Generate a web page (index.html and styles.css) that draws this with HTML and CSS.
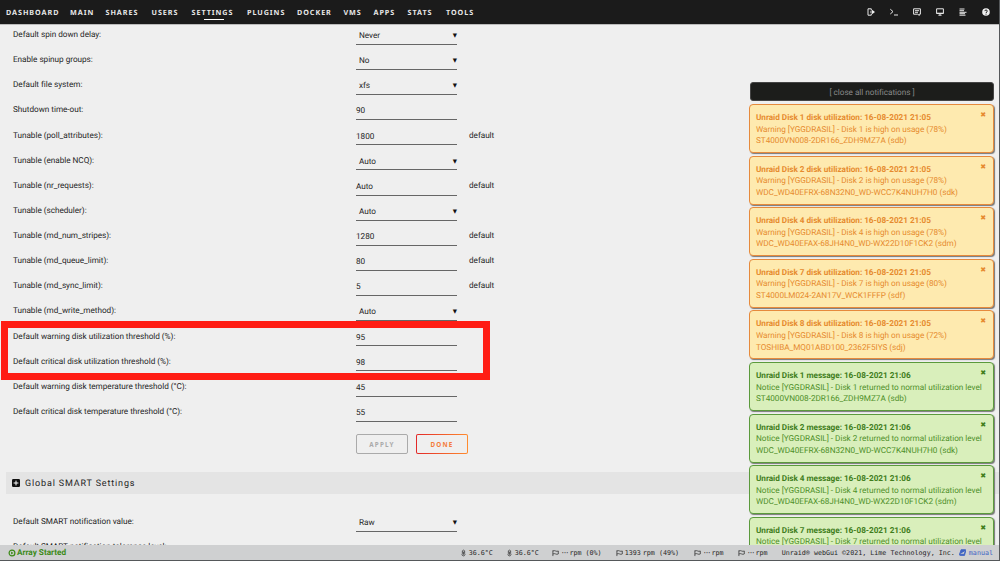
FILE: index.html
```
<!DOCTYPE html>
<html lang="en">
<head>
    <meta charset="UTF-8">
    <meta name="viewport" content="width=device-width, initial-scale=1.0">
    <title>Disk Settings</title>
    <link rel="stylesheet" href="styles.css">
</head>
<body>
    <header class="menu">
        <nav class="nav">
            <a>DASHBOARD</a>
            <a>MAIN</a>
            <a>SHARES</a>
            <a>USERS</a>
            <a class="active">SETTINGS</a>
            <a>PLUGINS</a>
            <a>DOCKER</a>
            <a>VMS</a>
            <a>APPS</a>
            <a>STATS</a>
            <a>TOOLS</a>
        </nav>
        <div class="tools">
            <svg viewBox="0 0 8 8"><path d="M4.300.8H1v6.400h3.300V5.500M4.300.8v1.700M3 4h3"/><path class="fill" d="M5 1.800 8 4 5 6.200z"/></svg>
            <svg viewBox="0 0 8 8"><path d="M.3 1.200 3 3.600.3 6M4 7h4"/></svg>
            <svg viewBox="0 0 8 8"><path d="M.6.8h6.800v5.400H6.300v1.300L4.800 6.200H.6zM2 2.700h4M2 4.300h3"/></svg>
            <svg viewBox="0 0 8 8"><path d="M.6.8h6.800v4.700H.6zM2.400 7.200h3.200M4 5.500v1.700" /><path d="M.6 5.200h6.800"/></svg>
            <svg viewBox="0 0 8 8"><path d="M.5 1h5M.5 2.700h4.500M.5 4.300h7M.5 5.700h5.500M.5 7.200h6"/></svg>
            <svg viewBox="0 0 8 8"><circle class="fill" cx="4" cy="4" r="3.800"/><path class="dark" d="M2.800 3.100c0-1.500 2.500-1.500 2.500 0C5.300 4 4 3.900 4 5M4 5.700v.9"/></svg>
        </div>
    </header>

    <main class="content">
        <form class="settings">
            <div class="row"><label>Default spin down delay:</label><span class="field select">Never</span></div>
            <div class="row"><label>Enable spinup groups:</label><span class="field select">No</span></div>
            <div class="row"><label>Default file system:</label><span class="field select">xfs</span></div>
            <div class="row"><label>Shutdown time-out:</label><span class="field">90</span></div>
            <div class="row"><label>Tunable (poll_attributes):</label><span class="field">1800</span><span class="note">default</span></div>
            <div class="row"><label>Tunable (enable NCQ):</label><span class="field select">Auto</span></div>
            <div class="row"><label>Tunable (nr_requests):</label><span class="field">Auto</span><span class="note">default</span></div>
            <div class="row"><label>Tunable (scheduler):</label><span class="field select">Auto</span></div>
            <div class="row"><label>Tunable (md_num_stripes):</label><span class="field">1280</span><span class="note">default</span></div>
            <div class="row"><label>Tunable (md_queue_limit):</label><span class="field">80</span><span class="note">default</span></div>
            <div class="row"><label>Tunable (md_sync_limit):</label><span class="field">5</span><span class="note">default</span></div>
            <div class="row"><label>Tunable (md_write_method):</label><span class="field select">Auto</span></div>
            <div class="marked">
                <div class="row"><label>Default warning disk utilization threshold (%):</label><span class="field">95</span></div>
                <div class="row"><label>Default critical disk utilization threshold (%):</label><span class="field">98</span></div>
            </div>
            <div class="row"><label>Default warning disk temperature threshold (°C):</label><span class="field">45</span></div>
            <div class="row"><label>Default critical disk temperature threshold (°C):</label><span class="field">55</span></div>
            <div class="buttons">
                <button type="button" class="btn" disabled>APPLY</button>
                <button type="button" class="btn done">DONE</button>
            </div>
        </form>
        <h2 class="title">
            <svg viewBox="0 0 8 8"><rect width="8" height="8" rx="1.200"/><path d="M4 1.600v4.800M1.600 4h4.800"/></svg>
            <span>Global SMART Settings</span>
        </h2>
        <form class="settings">
            <div class="row"><label>Default SMART notification value:</label><span class="field select">Raw</span></div>
            <div class="row"><label>Default SMART notification tolerance level:</label></div>
        </form>
    </main>

    <aside class="notices">
        <div class="close-all">[ close all notifications ]</div>
        <div class="notice warn"><span class="x">✖</span><b>Unraid Disk 1 disk utilization: 16-08-2021 21:05</b><p>Warning [YGGDRASIL] - Disk 1 is high on usage (78%)</p><p>ST4000VN008-2DR166_ZDH9MZ7A (sdb)</p></div>
        <div class="notice warn"><span class="x">✖</span><b>Unraid Disk 2 disk utilization: 16-08-2021 21:05</b><p>Warning [YGGDRASIL] - Disk 2 is high on usage (78%)</p><p>WDC_WD40EFRX-68N32N0_WD-WCC7K4NUH7H0 (sdk)</p></div>
        <div class="notice warn"><span class="x">✖</span><b>Unraid Disk 4 disk utilization: 16-08-2021 21:05</b><p>Warning [YGGDRASIL] - Disk 4 is high on usage (78%)</p><p>WDC_WD40EFAX-68JH4N0_WD-WX22D10F1CK2 (sdm)</p></div>
        <div class="notice warn"><span class="x">✖</span><b>Unraid Disk 7 disk utilization: 16-08-2021 21:05</b><p>Warning [YGGDRASIL] - Disk 7 is high on usage (80%)</p><p>ST4000LM024-2AN17V_WCK1FFFP (sdf)</p></div>
        <div class="notice warn"><span class="x">✖</span><b>Unraid Disk 8 disk utilization: 16-08-2021 21:05</b><p>Warning [YGGDRASIL] - Disk 8 is high on usage (72%)</p><p>TOSHIBA_MQ01ABD100_2362F5IYS (sdj)</p></div>
        <div class="notice ok"><span class="x">✖</span><b>Unraid Disk 1 message: 16-08-2021 21:06</b><p>Notice [YGGDRASIL] - Disk 1 returned to normal utilization level</p><p>ST4000VN008-2DR166_ZDH9MZ7A (sdb)</p></div>
        <div class="notice ok"><span class="x">✖</span><b>Unraid Disk 2 message: 16-08-2021 21:06</b><p>Notice [YGGDRASIL] - Disk 2 returned to normal utilization level</p><p>WDC_WD40EFRX-68N32N0_WD-WCC7K4NUH7H0 (sdk)</p></div>
        <div class="notice ok"><span class="x">✖</span><b>Unraid Disk 4 message: 16-08-2021 21:06</b><p>Notice [YGGDRASIL] - Disk 4 returned to normal utilization level</p><p>WDC_WD40EFAX-68JH4N0_WD-WX22D10F1CK2 (sdm)</p></div>
        <div class="notice ok"><span class="x">✖</span><b>Unraid Disk 7 message: 16-08-2021 21:06</b><p>Notice [YGGDRASIL] - Disk 7 returned to normal utilization level</p></div>
    </aside>

    <footer class="footer">
        <span class="array"><svg viewBox="0 0 8 8"><circle cx="4" cy="4" r="2.900"/><path d="M3.100 2.500v3L5.500 4z"/></svg>Array Started</span>
        <div class="sensors">
            <span><svg viewBox="0 0 8 8"><path d="M2.700 4.600V1.500q1.300-1.600 2.600 0v3.100q1 1.500-.4 2.500-1.300.6-2.200-.3-.8-1 0-2.200M4 2.500V6"/></svg>36.6°C</span>
            <span><svg viewBox="0 0 8 8"><path d="M2.700 4.600V1.500q1.300-1.600 2.600 0v3.100q1 1.500-.4 2.500-1.300.6-2.200-.3-.8-1 0-2.200M4 2.500V6"/></svg>36.6°C</span>
            <span><svg viewBox="0 0 8 8"><path d="M1 1v6.500M1 1.700q1.800-.8 3.200 0t3 0v3.400q-1.600.8-3 0T1 5.100"/></svg><i>···</i>rpm (0%)</span>
            <span><svg viewBox="0 0 8 8"><path d="M1 1v6.500M1 1.700q1.800-.8 3.200 0t3 0v3.400q-1.600.8-3 0T1 5.100"/></svg>1393<i></i>rpm (49%)</span>
            <span><svg viewBox="0 0 8 8"><path d="M1 1v6.500M1 1.700q1.800-.8 3.200 0t3 0v3.400q-1.600.8-3 0T1 5.100"/></svg><i>···</i>rpm</span>
            <span><svg viewBox="0 0 8 8"><path d="M1 1v6.500M1 1.700q1.800-.8 3.200 0t3 0v3.400q-1.600.8-3 0T1 5.100"/></svg><i>···</i>rpm</span>
        </div>
        <span class="copy">Unraid® webGui ©2021, Lime Technology, Inc.</span>
        <a class="manual"><svg viewBox="0 0 8 8"><path d="M2.400.8h5.200L6 6H.6zM.6 6q-.3 1.300.8 1.300h4.900L7.700 2"/></svg>manual</a>
    </footer>
</body>
</html>
```
FILE: styles.css
```
*,
*::before,
*::after {
    box-sizing: border-box;
}

body {
    display: flex;
    flex-direction: column;
    width: 1000px;
    height: 561px;
    margin: 0;
    overflow: hidden;
    background-color: #efefef;
    border-right: 1px solid #55585a;
    font-family: Roboto, "Noto Sans", sans-serif;
    font-size: 8.200px;
    letter-spacing: -.030px;
    text-rendering: geometricPrecision;
    color: #252525;
}

svg {
    flex: none;
    width: 8px;
    height: 8px;
    fill: none;
    stroke: currentColor;
    stroke-width: 1;
}

/* top menu */
.menu {
    display: flex;
    flex: none;
    justify-content: space-between;
    width: 1000px;
    height: 24px;
    padding: 0 10px 0 6px;
    background-color: #1b1b1b;
    box-shadow: 0 1px 0 #bbb;
    color: #e8e8e8;
}

.nav {
    display: grid;
    grid-template-columns: 64px 35.500px 46px 40px 55.500px 50px 46.500px 30px 34px 38.500px 40px;
    font-family: "Noto Sans", sans-serif;
    font-size: 7.200px;
    font-weight: bold;
    letter-spacing: .950px;
    line-height: 27px;
}

.active::after {
    content: "";
    display: block;
    width: 20px;
    height: 1px;
    margin: -8px 0 0 12px;
    background-color: #fff;
}

.tools {
    display: flex;
    align-items: center;
    gap: 15px;
}

.tools .fill {
    fill: #f0f0f0;
    stroke: none;
}

.tools .dark {
    stroke: #1b1b1b;
}

/* settings */
.content {
    flex: 1;
    min-height: 0;
    overflow: hidden;
}

.settings {
    padding: 0 0 0 13px;
}

.row {
    display: grid;
    grid-template-columns: 343px 101px 1fr;
    height: 25.130px;
    line-height: 23.500px;
}

.field {
    height: 20.800px;
    border-bottom: 1px solid #666;
    line-height: 24.500px;
}

.select {
    display: flex;
    justify-content: space-between;
    padding-left: 3px;
}

.select::after {
    content: "▼";
    font-family: "DejaVu Sans", sans-serif;
    font-size: 5.500px;
    line-height: 24px;
    color: #111;
}

.note {
    padding-left: 12px;
}

.marked {
    position: relative;
}

.marked::before {
    content: "";
    position: absolute;
    top: -4.500px;
    left: -12px;
    width: 489px;
    height: 59px;
    border: 7.500px solid #ff1d14;
}

.buttons {
    display: flex;
    gap: 8px;
    padding: 8px 0 0 343px;
}

.btn {
    width: 52px;
    height: 20px;
    padding: 0;
    border: 1px solid #aaa;
    border-radius: 2px;
    background: none;
    color: #aaa;
    font: bold 6.300px "Noto Sans", sans-serif;
    letter-spacing: 1.200px;
}

.done {
    border-color: transparent;
    background: linear-gradient(#efefef, #efefef) padding-box, linear-gradient(90deg, #e22828, #ff8c2f) border-box;
    color: #f47b3a;
}

.title {
    display: flex;
    align-items: center;
    gap: 5px;
    height: 22px;
    margin: 18px 0 17px 6px;
    padding-left: 6px;
    background-color: #e4e4e4;
    font-size: 9px;
    font-weight: normal;
    letter-spacing: .850px;
}

.title span {
    padding-top: 1px;
}

.title rect {
    fill: #111;
    stroke: none;
}

.title path {
    stroke: #fff;
}

/* notifications lie over the page */
.notices {
    position: absolute;
    top: 82px;
    left: 749px;
    width: 247px;
    height: 463px;
    padding-right: 2px;
    overflow: hidden;
}

.close-all {
    height: 19px;
    margin: 0 0 3px 1px;
    border: 1px solid #444;
    border-radius: 3px;
    background-color: #1c1d1b;
    color: #8a8a8a;
    line-height: 20px;
    text-align: center;
}

.notice {
    position: relative;
    height: 49px;
    margin-bottom: 2.620px;
    padding: 8px 6px 0;
    border: 1px solid;
    border-radius: 4px;
    box-shadow: 1px 1px 1px #777;
    line-height: 11.600px;
    white-space: nowrap;
}

.notice b {
    display: block;
}

.notice p {
    margin: 0;
}

.warn {
    background-color: #feeaaf;
    border-color: #e68a3c;
    color: #e68a2e;
}

.ok {
    background-color: #d9efbb;
    border-color: #5b9a3c;
    color: #4f8f2a;
}

.ok b,
.ok .x {
    color: #3f7d1c;
}

.x {
    position: absolute;
    top: 5px;
    right: 7px;
    font-family: "DejaVu Sans", sans-serif;
    font-size: 7px;
}

/* status bar */
.footer {
    display: flex;
    flex: none;
    align-items: center;
    width: 1000px;
    height: 16px;
    padding: 0 7px 0 8px;
    background-color: #cfd0d1;
    border-bottom: 1px solid #55585a;
    font-family: "DejaVu Sans Mono", monospace;
    font-size: 6.700px;
    letter-spacing: 0;
    white-space: pre;
}

.footer span,
.footer a {
    display: flex;
    align-items: center;
}

.array {
    width: 452px;
    color: #3c8a18;
    font-family: Roboto, sans-serif;
    font-size: 8.200px;
    font-weight: bold;
    line-height: 10px;
}

.array svg {
    margin-right: 1px;
    stroke-width: 1.200;
}

.array path {
    fill: currentColor;
    stroke: none;
}

.sensors {
    display: grid;
    grid-template-columns: 46px 46px 64px 78px 44px 43px;
}

.sensors svg {
    width: 7px;
    margin-right: 2px;
    stroke-width: .8;
}

.sensors i {
    min-width: 2px;
    font-style: normal;
    letter-spacing: -1.800px;
    margin-right: 2px;
}

.sensors i:empty {
    min-width: 0;
}

.copy {
    margin-left: 1px;
}

.manual {
    margin-left: 4px;
    color: #3f63c4;
}

.manual svg {
    width: 7px;
    height: 7px;
    margin-right: 3px;
    fill: currentColor;
}
```
